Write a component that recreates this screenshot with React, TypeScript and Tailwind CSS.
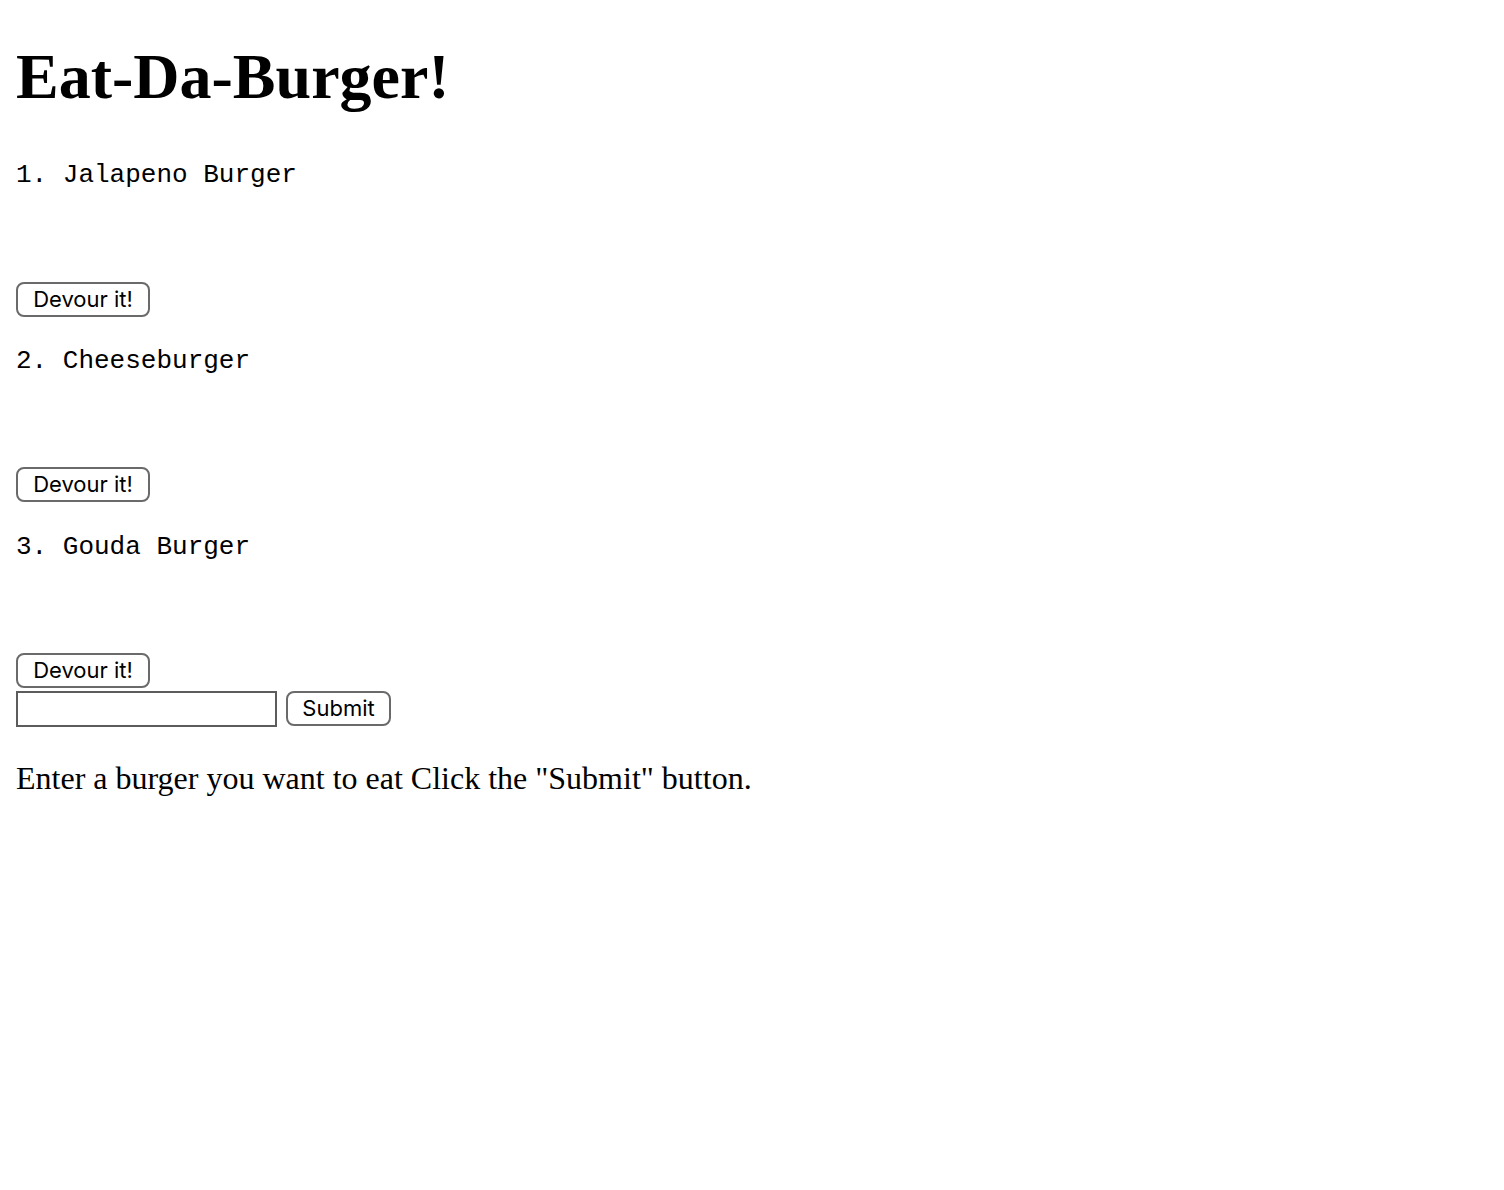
import React from "react";

const mono = "font-['Liberation_Mono','Courier_New',monospace] text-[26px] leading-[26px] h-[26px] whitespace-pre text-black";
const btn =
  "flex items-center justify-center h-[35px] border-2 border-[#6a6a6a] rounded-[8px] bg-white text-black font-['Inter','Liberation_Sans',sans-serif] text-[22px] leading-[35px] box-border";

export default function App() {
  return (
    <div className="min-h-[1190px] bg-white px-4 font-['Liberation_Serif','Times_New_Roman',serif] text-black flex flex-col items-start">
      <h1 className="mt-[45px] h-[64px] text-[64px] leading-[64px] font-bold whitespace-nowrap">
        Eat-Da-Burger!
      </h1>

      <p className={`${mono} mt-[53px]`}>1. Jalapeno Burger</p>
      <button className={`${btn} mt-[94px] w-[134px]`}>Devour it!</button>

      <p className={`${mono} mt-[31px]`}>2. Cheeseburger</p>
      <button className={`${btn} mt-[93px] w-[134px]`}>Devour it!</button>

      <p className={`${mono} mt-[32px]`}>3. Gouda Burger</p>
      <button className={`${btn} mt-[93px] w-[134px]`}>Devour it!</button>

      <form className="mt-[3px] flex items-start" onSubmit={(e) => e.preventDefault()}>
        <input
          type="text"
          className="w-[261px] h-[36px] border-2 border-[#5c5c5c] bg-white box-border outline-none"
        />
        <button type="submit" className={`${btn} ml-[9px] w-[105px]`}>
          Submit
        </button>
      </form>

      <p className="mt-[34.5px] h-[32px] text-[32px] leading-[32px] whitespace-nowrap">
        Enter a burger you want to eat Click the "Submit" button.
      </p>
    </div>
  );
}
